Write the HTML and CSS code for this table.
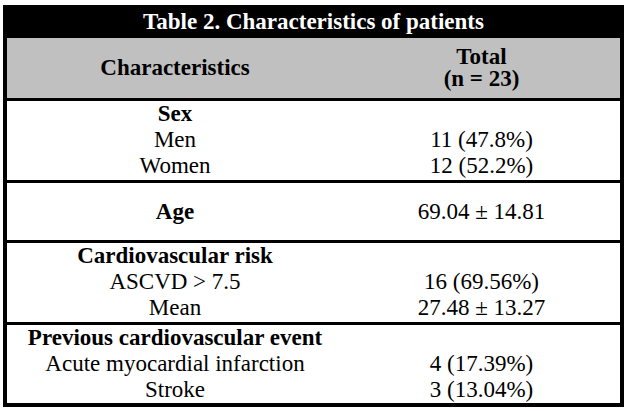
FILE: index.html
```html
<!DOCTYPE html>
<html lang="en">
<head>
<meta charset="utf-8">
<title>Table 2. Characteristics of patients</title>
<link rel="stylesheet" href="styles.css">
</head>
<body>
<div class="table">
  <div class="title">Table 2. Characteristics of patients</div>
  <div class="row head">
    <div class="cell">Characteristics</div>
    <div class="cell tight"><div>Total</div><div>(n = 23)</div></div>
  </div>
  <div class="row group g3 sep">
    <div class="cell"><div class="b">Sex</div><div>Men</div><div>Women</div></div>
    <div class="cell"><div>&nbsp;</div><div>11 (47.8%)</div><div>12 (52.2%)</div></div>
  </div>
  <div class="row group age sep">
    <div class="cell b">Age</div>
    <div class="cell">69.04 ± 14.81</div>
  </div>
  <div class="row group g3 sep">
    <div class="cell"><div class="b">Cardiovascular risk</div><div>ASCVD &gt; 7.5</div><div>Mean</div></div>
    <div class="cell"><div>&nbsp;</div><div>16 (69.56%)</div><div>27.48 ± 13.27</div></div>
  </div>
  <div class="row group g3 last">
    <div class="cell"><div class="b">Previous cardiovascular event</div><div>Acute myocardial infarction</div><div>Stroke</div></div>
    <div class="cell"><div>&nbsp;</div><div>4 (17.39%)</div><div>3 (13.04%)</div></div>
  </div>
</div>
</body>
</html>
```
FILE: styles.css
```css
html, body {
  margin: 0;
  padding: 0;
  background: #fff;
}
body {
  font-family: "Liberation Serif", "Times New Roman", serif;
  font-size: 23px;
  color: #000;
}
.table {
  margin: 5px 0 0 3px;
  width: 613px;
  border: 4px solid #000;
}
.title {
  height: 29px;
  box-sizing: border-box;
  padding-bottom: 4px;
  background: #000;
  color: #fff;
  font-weight: bold;
  text-align: center;
  line-height: 25px;
  white-space: nowrap;
}
.row {
  display: grid;
  grid-template-columns: 336px 277px;
  text-align: center;
  line-height: 26px;
  white-space: nowrap;
}
.head {
  height: 60px;
  background: #c0c0c0;
  font-weight: bold;
  align-items: center;
  border-bottom: 3px solid #000;
}
.tight {
  line-height: 22px;
}
.b {
  font-weight: bold;
}
.g3 {
  height: 79px;
  align-items: start;
}
.g3.last {
  height: 78px;
}
.age {
  height: 57px;
  align-items: center;
}
.sep {
  border-bottom: 3px solid #000;
}
```
